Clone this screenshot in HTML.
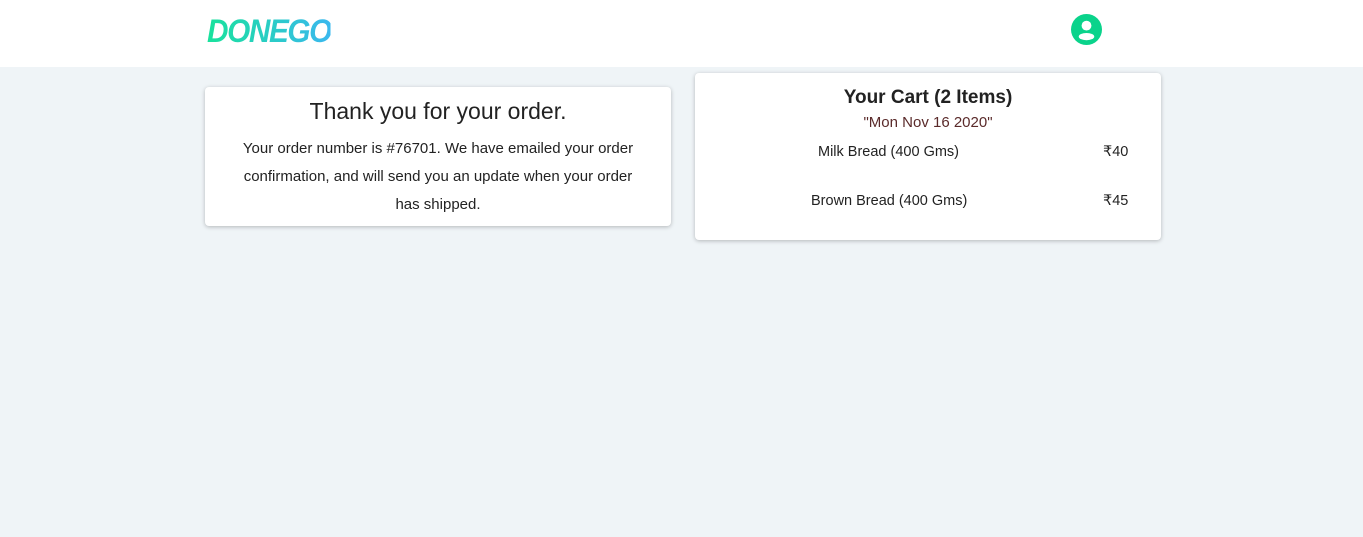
<!DOCTYPE html><html><head><style>
body{margin:0;width:1363px;height:537px;background:#eff4f7;font-family:"Liberation Sans",sans-serif;position:relative;overflow:hidden}
.hdr{position:absolute;left:0;top:0;width:1363px;height:67px;background:#fff}
.logo{position:absolute;left:207px;top:13px;font-weight:900;font-style:italic;font-size:32px;letter-spacing:-1.5px;transform:scaleX(0.93);transform-origin:left;background:linear-gradient(90deg,#19e29c,#3ab8ee);-webkit-background-clip:text;color:transparent}
.card{position:absolute;background:#fff;border-radius:4px;box-shadow:0 1px 4px rgba(0,0,0,.25);color:#222;text-align:center}
</style></head><body>
<div class="hdr"><div class="logo">DONEGO</div>
<svg style="position:absolute;left:1071px;top:14px" width="31" height="31" viewBox="0 0 24 24"><circle cx="12" cy="12" r="12" fill="#0ad38b"/><circle cx="12" cy="9" r="3.8" fill="#fff"/><ellipse cx="12" cy="17.5" rx="6" ry="2.8" fill="#fff"/></svg></div>
<div class="card" style="left:205px;top:87px;width:466px;height:139px">
<div style="font-size:23px;margin-top:11px">Thank you for your order.</div>
<div style="font-size:15px;line-height:28px;margin:10px 30px 0">Your order number is #76701. We have emailed your order confirmation, and will send you an update when your order has shipped.</div></div>
<div class="card" style="left:695px;top:73px;width:466px;height:167px">
<div style="font-size:19px;font-weight:bold;margin-top:14px">Your Cart (2 Items)</div>
<div style="font-size:15px;color:#5a2a2a;margin-top:5px">"Mon Nov 16 2020"</div>
<div style="position:absolute;left:123px;top:71px;font-size:14.5px">Milk Bread (400 Gms)</div><div style="position:absolute;left:408px;top:71px;font-size:14.5px">₹40</div>
<div style="position:absolute;left:116px;top:120px;font-size:14.5px">Brown Bread (400 Gms)</div><div style="position:absolute;left:408px;top:120px;font-size:14.5px">₹45</div>
</div></body></html>
